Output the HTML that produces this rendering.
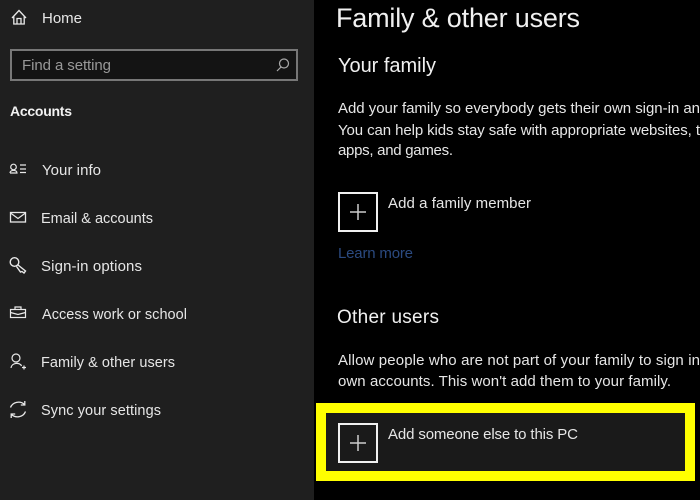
<!DOCTYPE html>
<html><head><meta charset="utf-8"><style>
html,body{margin:0;padding:0;width:700px;height:500px;overflow:hidden;background:#000}
svg{display:block}
text{font-family:"Liberation Sans",sans-serif;font-size:15px;fill:#e6e6e6}
.s{font-size:14.500px}
.i{fill:none;stroke:#e8e8e8;stroke-width:1.200}
</style></head><body>
<svg width="700" height="500" viewBox="0 0 700 500">
<rect width="700" height="500" fill="#000"/>
<rect width="314" height="500" fill="#1f1f1f"/>
<path class="i" style="stroke-width:1.300" d="M12 18 L19 10.500 L26 18 M13.800 16.500 V24 H24.200 V16.500 M17 24 V18.500 H21 V24"/>
<text x="42" y="23" textLength="40">Home</text>
<rect x="11" y="50" width="286" height="30" fill="#141414" stroke="#777" stroke-width="2"/>
<text x="22" y="70" textLength="89" style="fill:#999">Find a setting</text>
<circle class="i" cx="284" cy="63.500" r="4.500" style="stroke:#aaa"/><path class="i" style="stroke:#aaa" d="M281 67 L277 71"/>
<text x="10" y="116" textLength="62" style="font-weight:700;font-size:14px;fill:#f2f2f2">Accounts</text>
<circle class="i" cx="13.500" cy="167" r="2.800"/><path class="i" d="M10 173 C10 169.500 17 169.500 17 173 H10 M20 165 H26 M20 169 H26 M20 172.500 H26"/>
<text x="42" y="175" textLength="59">Your info</text>
<rect class="i" x="10.500" y="212.500" width="15" height="9.500" style="stroke-width:1.300"/><path class="i" d="M10.500 213 L18 218.500 L25.500 213"/>
<text class="s" x="41" y="223" textLength="112">Email &amp; accounts</text>
<circle class="i" cx="14.500" cy="262" r="4.300" style="stroke-width:1.400"/><path class="i" style="stroke-width:1.400" d="M18 265 L25.500 271 L24 273 L22 271.500 L20.500 272 L16.500 266.500"/>
<text x="41" y="271" textLength="101">Sign-in options</text>
<rect class="i" x="10.500" y="309.500" width="15" height="8"/><path class="i" d="M10.500 312.500 L18 314.500 L25.500 312.500 M15 309.500 V307 H21 V309.500"/>
<text class="s" x="42" y="319" textLength="145">Access work or school</text>
<circle class="i" cx="16" cy="358" r="4"/><path class="i" d="M11 368 C11.500 362.500 20 362 21.500 366 M22 367.500 H26 M24 365.500 V369.500"/>
<text class="s" x="41" y="367" textLength="134">Family &amp; other users</text>
<path class="i" style="stroke-width:1.300" d="M10.500 407.500 A8.500 8 0 0 1 24.500 404.500 M25.500 411.500 A8.500 8 0 0 1 11.500 414.500 M24.800 401 V405 H20.800 M11.200 418 V414 H15.200"/>
<text class="s" x="41" y="415" textLength="120">Sync your settings</text>

<text x="336" y="27" textLength="244" style="font-size:27px;fill:#f0f0f0">Family &amp; other users</text>
<text x="338" y="72" textLength="98" style="font-size:20px;fill:#f0f0f0">Your family</text>
<text x="338" y="113" textLength="362">Add your family so everybody gets their own sign-in an</text>
<text x="338" y="135" textLength="362">You can help kids stay safe with appropriate websites, t</text>
<text x="338" y="155" textLength="115">apps, and games.</text>
<rect x="339" y="193" width="38" height="38" fill="none" stroke="#f0f0f0" stroke-width="2"/>
<path d="M358 204 V220 M350 212 H366" stroke="#ccc" stroke-width="1.500" fill="none"/>
<text x="388" y="208" textLength="143">Add a family member</text>
<text x="338" y="258" textLength="75" style="fill:#2b4a80">Learn more</text>
<text x="337" y="323" textLength="102" style="font-size:19px;fill:#f0f0f0">Other users</text>
<text x="338" y="365" textLength="362">Allow people who are not part of your family to sign in</text>
<text x="338" y="386" textLength="333">own accounts. This won't add them to your family.</text>
<rect x="321" y="408" width="369" height="68" fill="#1a1a1a" stroke="#ffff00" stroke-width="10"/>
<rect x="339" y="424" width="38" height="38" fill="none" stroke="#f0f0f0" stroke-width="2"/>
<path d="M358 435 V451 M350 443 H366" stroke="#ccc" stroke-width="1.500" fill="none"/>
<text x="388" y="439" textLength="190">Add someone else to this PC</text>
</svg>
</body></html>
